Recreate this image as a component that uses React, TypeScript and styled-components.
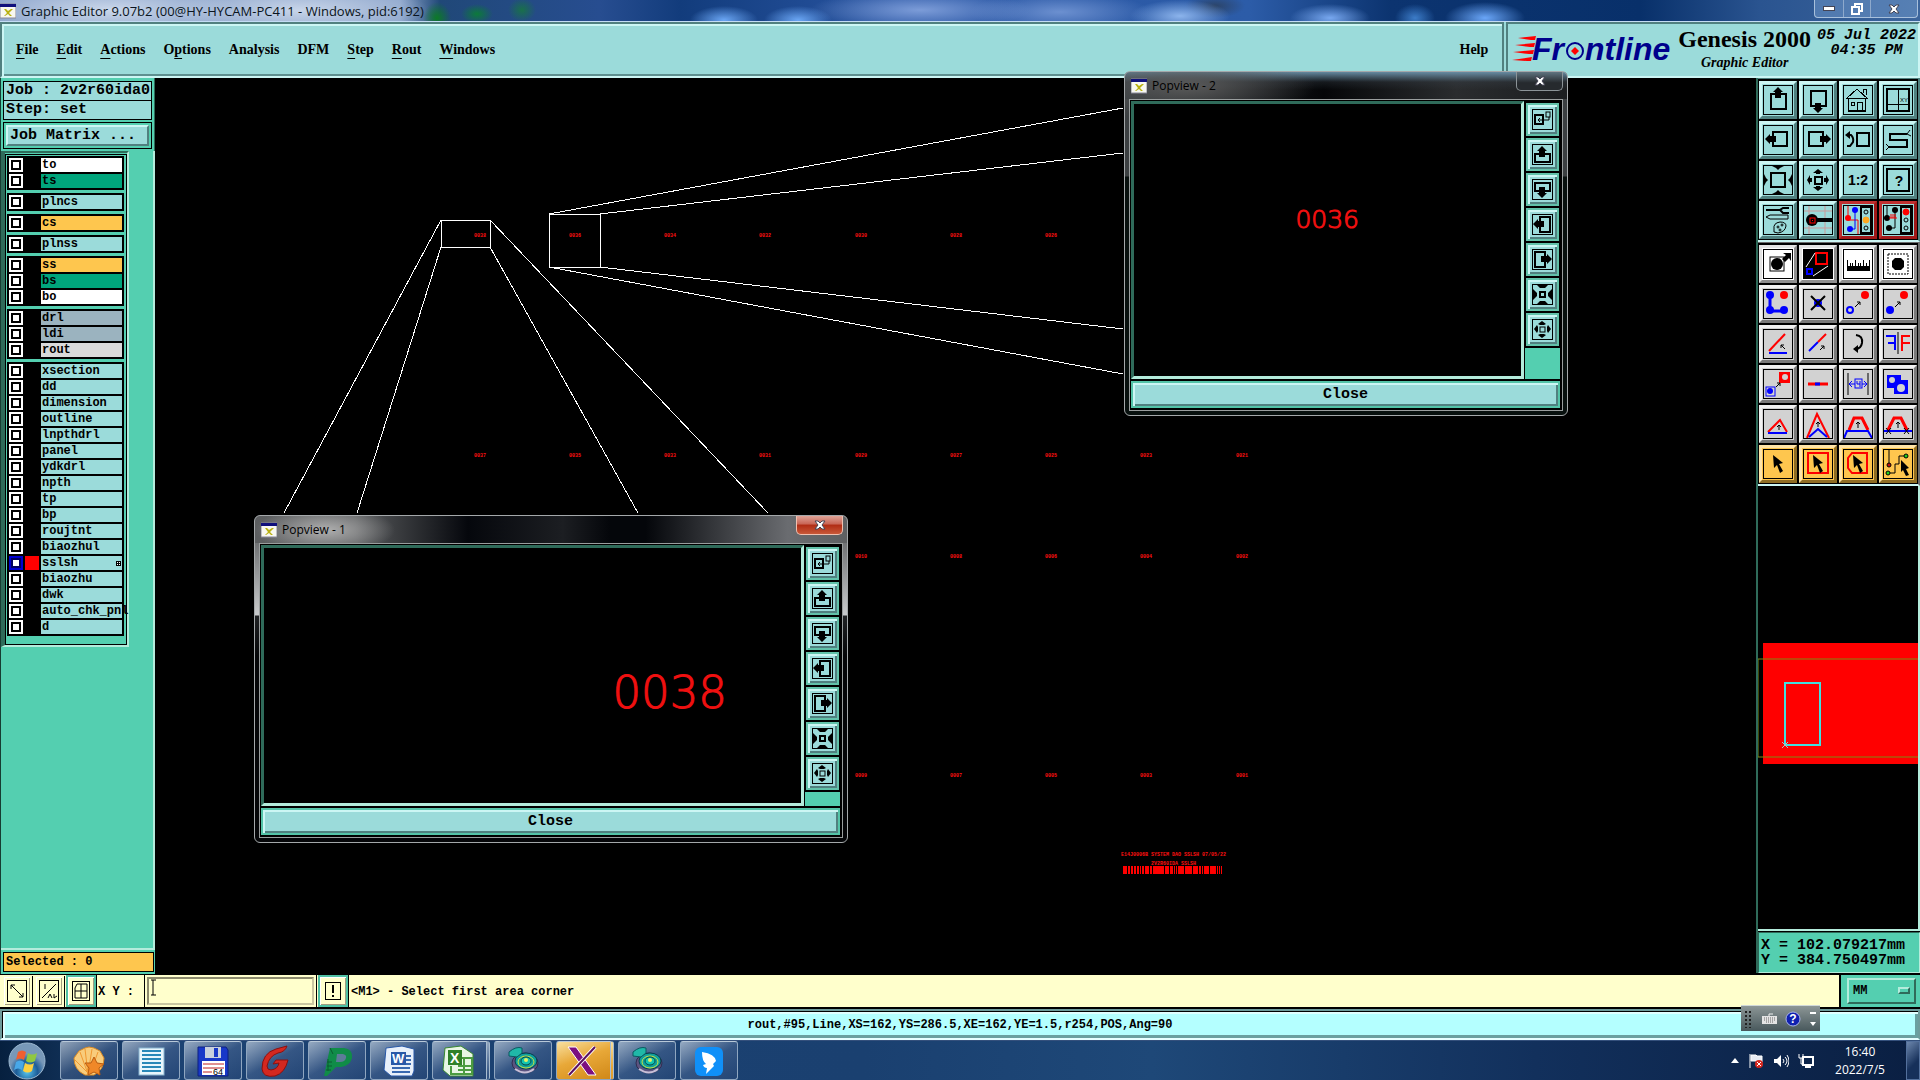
import React from 'react';
import styled, { createGlobalStyle, css } from 'styled-components';

const c = {
  aqua: '#9bdbda',
  aquaLight: '#ccf6f4',
  aquaDark: '#50807f',
  teal: '#54cfb0',
  tealLight: '#b4ecdc',
  tealDark: '#2f6b5a',
  orange: '#fec64e',
  cream: '#ffffcc',
  grey: '#d2d2d2',
  red: '#ff0000',
  blue: '#0000ff',
};
const mono = '"Liberation Mono", "Courier New", monospace';
const serif = '"Liberation Serif", "Times New Roman", serif';
const ui = '"Open Sans", "Noto Sans", sans-serif';

const Global = createGlobalStyle`
  *, *::before, *::after { box-sizing: border-box; }
  body { margin: 0; background: #000; color: #000; font-family: ${mono}; }
  button, input, select { font: inherit; color: inherit; margin: 0; padding: 0; border-radius: 0; }
  svg { display: block; flex: none; }
`;

const raised = (light: string, dark: string, w: number) => css`
  border: ${w}px solid;
  border-color: ${light} ${dark} ${dark} ${light};
`;

const Screen = styled.div`
  position: relative;
  display: flex;
  flex-direction: column;
  min-height: 100vh;
  overflow: hidden;
`;

/* ---------- title bar ---------- */
const TitleBar = styled.div`
  display: flex;
  justify-content: space-between;
  height: 22px;
  border-bottom: 1px solid #c4dcf4;
  overflow: hidden;
  background:
    radial-gradient(ellipse 130px 24px at 110px 10px, rgba(206, 218, 236, 0.95), transparent),
    radial-gradient(ellipse 130px 24px at 300px 10px, rgba(206, 218, 236, 0.9), transparent),
    radial-gradient(ellipse 14px 16px at 437px 18px, #0c7a26, transparent),
    radial-gradient(ellipse 16px 10px at 477px 14px, #0c7a3a, transparent),
    radial-gradient(ellipse 14px 12px at 522px 10px, #19704a, transparent),
    radial-gradient(ellipse 34px 14px at 724px 20px, #6aa6f4, transparent),
    radial-gradient(ellipse 34px 14px at 798px 20px, #6aa6f4, transparent),
    radial-gradient(ellipse 110px 20px at 920px 10px, #7c9cd8, transparent),
    radial-gradient(ellipse 90px 20px at 1060px 12px, #6c90d0, transparent),
    radial-gradient(ellipse 50px 16px at 1180px 16px, #8cb4ec, transparent),
    radial-gradient(ellipse 30px 12px at 1215px 6px, #2c4468, transparent),
    radial-gradient(ellipse 40px 14px at 1330px 18px, #78a8f0, transparent),
    radial-gradient(ellipse 20px 14px at 1415px 18px, #3c7cc8, transparent),
    radial-gradient(ellipse 40px 16px at 1485px 18px, #6aa6f8, transparent),
    linear-gradient(90deg, #8ea6cc 0, #8ea6cc 400px, #204878 440px, #274d90 600px, #123c7c 680px, #2a56a4 900px, #2c5ca8 1250px, #0c3470 1390px, #08306a 1640px, #2a5490 1760px, #3c659c 100%);
`;
const TitleText = styled.div`
  display: flex;
  align-items: center;
  gap: 5px;
  font: 13px/20px ${ui};
  color: #0a1420;
  white-space: nowrap;
`;
const WinControls = styled.div`
  display: flex;
  height: 18px;
  margin-right: 2px;
  border: 1px solid #a8c0dc;
  border-top: 0;
  border-radius: 0 0 4px 4px;
  background: rgba(120, 160, 208, 0.45);
`;
const WinControl = styled.button<{ $w: number }>`
  display: grid;
  place-items: center;
  width: ${p => p.$w}px;
  border: 0;
  border-left: 1px solid #8ea9cc;
  background: none;
  &:first-child { border-left: 0; }
`;

/* ---------- header ---------- */
const Header = styled.header`
  display: flex;
  height: 56px;
  background: ${c.aqua};
`;
const MenuBar = styled.nav`
  flex: 1;
  display: flex;
  align-items: center;
  gap: 18px;
  padding: 0 14px;
  border: 2px solid;
  border-color: ${c.aquaDark} ${c.aquaDark} ${c.aquaLight} ${c.aquaDark};
  box-shadow: inset 2px 2px ${c.aquaLight}, inset 0 -2px #5e9090;
`;
const MenuItem = styled.button<{ $end?: boolean }>`
  border: 0;
  background: none;
  font: bold 14px/18px ${serif};
  margin-left: ${p => (p.$end ? 'auto' : '0')};
  u { text-underline-offset: 4px; text-decoration-thickness: 1px; }
`;
const Brand = styled.div`
  display: flex;
  align-items: flex-start;
  gap: 2px;
  padding: 2px 2px 0 4px;
  margin-left: 2px;
  border: 2px solid;
  border-color: ${c.aquaDark} ${c.aquaLight} ${c.aquaLight} ${c.aquaDark};
`;
const Product = styled.div`
  font: bold 24px/26px ${serif};
  text-align: center;
  white-space: nowrap;
  margin-right: 4px;
`;
const SubProduct = styled.div`
  font: italic bold 14px/22px ${serif};
`;
const Clock = styled.div`
  font: italic bold 15px/15px ${mono};
  text-align: center;
  white-space: nowrap;
  padding-top: 2px;
`;

/* ---------- left column ---------- */
const Body = styled.div`
  flex: 1;
  display: flex;
  background: #000;
`;
const Left = styled.aside`
  display: flex;
  flex-direction: column;
  flex: none;
  width: 155px;
  margin-bottom: 1px;
  background: ${c.teal};
  border-left: 1px solid #163c32;
  font-weight: bold;
`;
const JobBox = styled.div`
  display: flex;
  flex-direction: column;
  padding: 3px 2px 2px;
  border-right: 1px solid ${c.tealDark};
  font-size: 15px;
`;
const Field = styled.div`
  height: 20px;
  margin-bottom: -1px;
  padding-left: 2px;
  border: 1px solid #000;
  background: ${c.aqua};
  line-height: 18px;
  white-space: nowrap;
`;
const MatrixWrap = styled.div`
  display: flex;
  margin-top: 3px;
  padding: 2px;
  height: 27px;
  border: 1px solid #000;
`;
const MatrixButton = styled.button`
  flex: 1;
  ${raised(c.aquaLight, c.aquaDark, 2)}
  background: ${c.aqua};
  padding-left: 2px;
  text-align: left;
  line-height: 17px;
  font-weight: bold;
`;
const LayerArea = styled.div`
  flex: 1;
  border-right: 2px solid ${c.tealLight};
  border-bottom: 2px solid ${c.tealLight};
`;
const LayerPanel = styled.div`
  width: 128px;
  padding: 1px 0 0 0;
  border: solid;
  border-width: 2px 2px 2px 4px;
  border-color: ${c.tealDark} ${c.tealLight} ${c.tealLight} ${c.tealDark};
`;
const LayerList = styled.div`
  display: flex;
  flex-direction: column;
  gap: 3px;
  padding: 1px 2px 8px 1px;
  border: 1px solid #000;
`;
const Group = styled.div`
  display: flex;
  flex-direction: column;
  gap: 2px;
  padding: 2px;
  background: #000;
`;
const LayerRow = styled.label`
  display: grid;
  grid-template-columns: 14px 14px 1fr;
  gap: 2px;
  height: 14px;
`;
const Tick = styled.input`
  appearance: none;
  width: 14px;
  height: 14px;
  border: 2px solid #fff;
  background: #fff;
  box-shadow: inset 0 0 0 2px #000;
  &:checked { border-color: #0000d0; box-shadow: inset 0 0 0 2px #000060; }
`;
const Swatch = styled.span<{ $on?: boolean }>`
  background: ${p => (p.$on ? c.red : '#000')};
`;
const LayerName = styled.span<{ $bg: string }>`
  display: flex;
  align-items: center;
  justify-content: space-between;
  min-width: 0;
  padding: 0 1px;
  background: ${p => p.$bg};
  font-size: 12px;
  line-height: 14px;
`;
const Selected = styled.div`
  margin: 2px 1px 2px 2px;
  height: 20px;
  padding-left: 2px;
  border: 1px solid #000;
  background: ${c.orange};
  font-size: 12px;
  line-height: 18px;
`;

/* ---------- canvas ---------- */
const Canvas = styled.main`
  flex: 1;
  min-width: 0;
  background: #000;
`;
const Tiny = styled.text`
  font: bold 5px ${mono};
  fill: #ff1010;
`;

/* ---------- right column ---------- */
const Right = styled.aside`
  display: flex;
  flex-direction: column;
  flex: none;
  width: 164px;
  margin-bottom: 2px;
  border-left: 2px solid ${c.tealDark};
`;
const ToolGrid = styled.div<{ $edge: string }>`
  display: grid;
  grid-template-columns: repeat(4, 38px);
  gap: 2px;
  padding: 2px 2px 1px 1px;
  border-top: 1px solid ${p => p.$edge};
  border-bottom: 2px solid ${c.aquaLight};
  border-right: 2px solid ${p => p.$edge};
`;
const tones = {
  aqua: [c.aqua, c.aquaLight, c.aquaDark],
  alert: [c.aqua, '#c03030', '#a01818'],
  white: ['#ffffff', '#e4e4e4', '#8e8e8e'],
  grey: [c.grey, '#f2f2f2', '#7a7a7a'],
  orange: [c.orange, '#ffe4a8', '#8f6d24'],
};
type Tone = keyof typeof tones;
const ToolButton = styled.button<{ $tone: Tone }>`
  display: grid;
  place-items: center;
  width: 38px;
  height: 38px;
  background: ${p => tones[p.$tone][0]};
  ${p => raised(tones[p.$tone][1], tones[p.$tone][2], 3)}
`;
const Preview = styled.div`
  flex: 1;
  background: #000;
  border-right: 2px solid ${c.tealLight};
  border-bottom: 2px solid ${c.tealLight};
`;
const Coords = styled.div`
  margin-top: 1px;
  padding: 5px 2px 4px;
  background: ${c.teal};
  ${raised(c.tealDark, c.tealLight, 1)}
  font: bold 15px/15px ${mono};
  white-space: pre;
`;

/* ---------- command line ---------- */
const Command = styled.div`
  display: flex;
  height: 34px;
  padding-left: 2px;
  background: ${c.cream};
  border-bottom: 2px solid #000;
  font: bold 12px/16px ${mono};
`;
const CmdButton = styled.button<{ $on?: boolean }>`
  display: grid;
  place-items: center;
  width: 30px;
  margin-right: 2px;
  border: 2px solid ${p => (p.$on ? '#4fc0a4' : c.cream)};
  background: ${c.cream};
  box-shadow: inset 1px 1px #fff, inset -1px -1px #a09c80, ${p => (p.$on ? '1px 0 #000' : '1px 1px #000')};
`;
const CmdLabel = styled.label`
  width: 46px;
  line-height: 34px;
  white-space: pre;
`;
const EntryWrap = styled.div`
  position: relative;
  display: flex;
  width: 173px;
  margin-right: 1px;
  padding: 2px;
  border-left: 1px solid #000;
  border-right: 1px solid #000;
`;
const Entry = styled.input`
  flex: 1;
  min-width: 0;
  background: ${c.cream};
  ${raised('#8c8a6c', '#c9c7a2', 2)}
  outline: 0;
  padding-left: 4px;
`;
const Caret = styled.svg`
  position: absolute;
  left: 5px;
  top: 4px;
`;
const Prompt = styled.div`
  flex: 1;
  padding-left: 1px;
  line-height: 34px;
`;
const UnitBox = styled.div`
  position: relative;
  display: flex;
  width: 81px;
  padding: 3px 4px 3px 6px;
  border-left: 2px solid #000;
  background: ${c.teal};
`;
const Unit = styled.select`
  flex: 1;
  appearance: none;
  background: ${c.teal};
  ${raised(c.tealLight, c.tealDark, 2)}
  padding-left: 4px;
  outline: 0;
`;
const UnitMark = styled.span`
  position: absolute;
  right: 10px;
  top: 12px;
  width: 12px;
  height: 7px;
  ${raised(c.tealLight, c.tealDark, 2)}
`;
const Status = styled.div`
  height: 31px;
  border: 2px solid #6e9c9c;
  border-bottom-color: #e6ffff;
  background: #b4ffff;
  box-shadow: inset 1px 1px #000, inset 3px 3px #e0ffff, inset -3px -3px #6aa0a0;
  font: bold 12px/28px ${mono};
  text-align: center;
`;

/* ---------- task bar ---------- */
const TaskBar = styled.footer`
  display: flex;
  align-items: stretch;
  height: 40px;
  padding-left: 6px;
  border-top: 1px solid #34507c;
  background: linear-gradient(90deg, #06203f, #1c4272 8%, #1a4070 45%, #1e4878 60%, #12305c 80%, #0a1f42);
`;
const Start = styled.button`
  width: 44px;
  margin-right: 10px;
  border: 0;
  background: none;
`;
const Tasks = styled.div`
  flex: 1;
  display: flex;
  gap: 4px;
`;
const Task = styled.button<{ $active?: boolean; $stacked?: boolean }>`
  display: grid;
  place-items: center;
  width: 58px;
  border: 1px solid #8fa6c0;
  border-top-color: #b8c8d8;
  border-radius: 3px;
  ${p => p.$stacked && css`
    padding-right: 4px;
    border-right: 4px double #a8bcd0;
  `}
  background: ${p =>
    p.$active
      ? 'linear-gradient(160deg, #f8e0a0, #e8a838 45%, #d08818)'
      : 'linear-gradient(150deg, rgba(190,204,220,0.75), rgba(70,100,145,0.6) 50%, rgba(40,72,120,0.6))'};
`;
const Tray = styled.div`
  display: flex;
  align-items: center;
  gap: 9px;
  color: #fff;
  font: 12px/18px ${ui};
  text-align: center;
`;
const TrayTime = styled.div`
  width: 74px;
`;
const ShowDesktop = styled.button`
  align-self: stretch;
  width: 14px;
  border: 1px solid #53709c;
  background: linear-gradient(135deg, #6c86ac, #16305a 60%);
`;
const LangBar = styled.div`
  position: absolute;
  right: 100px;
  bottom: 49px;
  display: flex;
  align-items: center;
  justify-content: space-around;
  width: 79px;
  height: 26px;
  border-top: 1px solid #d0d8d8;
  background: linear-gradient(#8c9696, #48585c);
`;

/* ---------- popview windows ---------- */
const Window = styled.section<{ $x: number; $y: number; $w: number; $h: number; $dim?: boolean }>`
  position: absolute;
  left: ${p => p.$x}px;
  top: ${p => p.$y}px;
  width: ${p => p.$w}px;
  height: ${p => p.$h}px;
  display: flex;
  flex-direction: column;
  padding: 0 4px 4px;
  border: 1px solid #a4a8aa;
  border-radius: 6px;
  background: ${p =>
    p.$dim
      ? `radial-gradient(ellipse 130px 34px at 60px 14px, #5a5a5a, transparent),
         linear-gradient(rgba(110,150,175,0.9), rgba(60,70,80,0.3) 10px, transparent 18px),
         linear-gradient(90deg, #30363a, #050608 45%, #2a2c2e 75%, #1c1e20) 0 0 / 100% 27px no-repeat,
         linear-gradient(#3c4042 104px, #08100e 105px)`
      : `radial-gradient(ellipse 70px 24px at 70px 14px, #b0b0b0, transparent),
         linear-gradient(90deg, #5c5e60, #5a5c5e 17%, #05070c 36%, #1c1e22 52%, #04060a 60%, #04060a 66%, #6a6c70 90%, #5e6062) 0 0 / 100% 27px no-repeat,
         linear-gradient(#707274 27px, #c8cacc 99px, #202224 100px, #050608 140px)`};
`;
const WindowTitle = styled.div`
  display: flex;
  justify-content: space-between;
  height: 27px;
  padding-left: 2px;
  font: 12px/26px ${ui};
  color: #000;
`;
const WindowName = styled.div`
  display: flex;
  align-items: center;
  gap: 5px;
`;
const WindowClose = styled.button<{ $dim?: boolean }>`
  display: grid;
  place-items: center;
  width: 47px;
  height: 19px;
  border: 1px solid ${p => (p.$dim ? '#8c9498' : '#f0c0b0')};
  border-top: 0;
  border-radius: 0 0 5px 5px;
  background: ${p => (p.$dim ? 'linear-gradient(#607480, #262a2e 60%)' : 'linear-gradient(#e0a498, #c86454 45%, #b02c14 50%, #c85838)')};
`;
const WindowBody = styled.div`
  flex: 1;
  display: grid;
  grid-template-columns: 1fr 35px;
  grid-template-rows: 1fr 28px;
  gap: 1px;
  padding: 1px 2px 2px 1px;
  border: 1px solid #9a9e9e;
  background: #000;
`;
const View = styled.div<{ $pad: string }>`
  ${raised(c.tealDark, c.tealLight, 3)}
  background: #000;
  padding: ${p => p.$pad};
  text-align: right;
`;
const Reading = styled.span<{ $size: number }>`
  font: 200 ${p => p.$size}px/${p => p.$size}px "DejaVu Sans Light", "DejaVu Sans", sans-serif;
  color: #f01010;
  -webkit-text-stroke: 1px #f01010;
`;
const PopTools = styled.div`
  display: flex;
  flex-direction: column;
  gap: 2px;
  padding: 2px 1px 0;
`;
const PopFill = styled.div`
  flex: 1;
  margin: 0 -1px;
  background: ${c.teal};
`;
const PopButton = styled.button`
  display: grid;
  place-items: center;
  width: 33px;
  height: 33px;
  border: 2px solid #62c2aa;
  background: ${c.aqua};
  box-shadow: inset 2px 2px ${c.aquaLight}, inset -2px -2px ${c.aquaDark};
`;
const CloseButton = styled.button`
  grid-column: 1 / 3;
  margin-top: 1px;
  border: 2px solid #54c4a8;
  background: ${c.aqua};
  box-shadow: inset 2px 2px ${c.aquaLight}, inset -2px -2px ${c.aquaDark};
  font: bold 15px/20px ${mono};
`;

/* ---------- drawings ---------- */
const K = '#000';
const sq = (x: number, y: number, w: number, h = w, s = 2, col = K) => (
  <rect x={x} y={y} width={w} height={h} fill="none" stroke={col} strokeWidth={s} />
);
const cursor = <path d="M10 6l10 8-4 1 4 7-3 2-3-8-3 3z" fill={K} />;
const smallArrow = <path d="M12 18l5-5M14 13h3v3" fill="none" stroke={K} />;
const outArrows = <path d="M15 4l5 4h-3v1h-4V8h-3zM15 26l5-4h-3v-1h-4v1h-3zM4 15l3-5v3h2v4H7v3zM26 15l-3-5v3h-2v4h2v3z" fill={K} />;
const inArrows = <path d="M9 1h12l-4 2-2 2-2-2zM9 29h12l-4-2-2-2-2 2zM1 9v12l2-4 2-2-2-2zM29 9v12l-2-4-2-2 2-2z" fill={K} />;
const lights = (on: number, col: string) => (
  <>
    <rect x="18" y="2" width="10" height="26" fill={c.aqua} stroke={K} strokeWidth="2" />
    {[7, 15, 23].map((y, i) => (
      <circle key={y} cx="23" cy={y} r={i === on ? 3 : 2} fill={i === on ? col : 'none'} stroke={i === on ? col : K} />
    ))}
  </>
);

const icons: Record<string, React.ReactNode> = {
  'Pan up': <>{sq(8, 9, 15)}<path d="M15 2l5 5h-2v6h-6V7h-2z" fill={K} /></>,
  'Pan down': <>{sq(8, 6, 15)}<path d="M15 28l5-5h-2v-5h-6v5h-2z" fill={K} /></>,
  Home: (
    <g fill="none" stroke={K} shapeRendering="crispEdges">
      <path d="M3 14L14 4l11 10M5 13v13h17V13M14 26v-9h5v9M4 13h20M20 8V4h3v6" />
      <rect x="8" y="17" width="3" height="3" /><path d="M5 26h18" strokeWidth="2" />
    </g>
  ),
  'XY grid': <>{sq(4, 4, 22)}<path d="M15 4v22M4 19h22" stroke={K} shapeRendering="crispEdges" /><text x="17" y="17" fontSize="6" fontFamily="Liberation Sans">XY</text></>,
  'Pan left': <>{sq(10, 7, 14)}<path d="M2 14l5-5v2h6v6H7v2z" fill={K} /></>,
  'Pan right': <>{sq(6, 7, 14)}<path d="M28 14l-5-5v2h-6v6h6v2z" fill={K} /></>,
  'Previous view': <>{sq(14, 8, 12, 13)}<path d="M5 10h3q3 3 2 7l-3 4H4" fill="none" stroke={K} strokeWidth="2" /><path d="M2 10l5-4v8z" fill={K} /></>,
  Serpentine: <><path d="M24 9H7v6h17v7H6" fill="none" stroke={K} strokeWidth="2" /><path d="M24 9l3-4M28 11l-4-2M6 22l-3-3M6 22l-3 3" stroke={K} fill="none" /></>,
  'Zoom in': <>{sq(8, 8, 14)}{inArrows}</>,
  'Zoom out': <>{sq(12, 12, 7)}{outArrows}</>,
  'Zoom 1:2': <text x="15" y="20" textAnchor="middle" fontFamily="Liberation Sans" fontWeight="bold" fontSize="14">1:2</text>,
  Query: <>{sq(4, 4, 22)}<text x="16" y="21" textAnchor="middle" fontFamily="Liberation Sans" fontWeight="bold" fontSize="14">?</text></>,
  Setup: (
    <g fill="none" stroke={K}>
      <path d="M3 5h14" strokeWidth="2" /><path d="M26 3h-6l-3 2 3 3h6" strokeWidth="2" />
      <path d="M3 12l4-2h18v4H7z" /><path d="M11 24q-1-6 6-7 6 0 6 4-1 6-8 7l-4-1z" /><circle cx="15" cy="22" r="1" /><circle cx="19" cy="20" r="1" /><circle cx="17" cy="25" r="1" />
    </g>
  ),
  Magnify: (
    <>
      <path d="M6 1v28M22 1v28M1 6h28M1 23h28" stroke="#c99" /><circle cx="9" cy="15" r="6" fill={K} />
      <path d="M14 15h15" stroke={K} strokeWidth="4" />{sq(7, 13, 5, 5, 1, c.red)}<rect x="9" y="15" width="1" height="1" fill={c.red} />
    </>
  ),
  'Check nets': (
    <>
      <path d="M5 1v14h10v14" fill="none" stroke={c.red} /><circle cx="5" cy="13" r="3" fill={c.red} />
      <path d="M12 4v20H6" fill="none" stroke={c.blue} /><circle cx="12" cy="5" r="3" fill={c.blue} /><circle cx="7" cy="24" r="3" fill={c.blue} />
      {lights(1, '#fea820')}
    </>
  ),
  'Stop nets': (
    <>
      <path d="M4 1v12M12 5v18H6" fill="none" stroke={K} /><circle cx="4" cy="13" r="3" fill={K} /><circle cx="12" cy="5" r="3" fill={K} /><circle cx="6" cy="23" r="3" fill={K} />
      <path d="M6 13h8M8 9v4M10 9v4M12 9v4" stroke={c.red} />{lights(0, c.red)}
    </>
  ),
  'Move feature': <>{sq(7, 8, 14, 14, 1)}<circle cx="14" cy="15" r="6" fill={K} /><path d="M19 10l4-4-3-2h8v8l-2-3-4 4z" fill={K} /></>,
  Popview: <><rect x="1" y="1" width="28" height="28" fill={K} />{sq(13, 4, 11, 11, 2, c.red)}{sq(4, 20, 5, 5, 2, c.blue)}<path d="M3 18L12 4M10 27l15-10" stroke="#fff" /></>,
  Ruler: <g shapeRendering="crispEdges"><rect x="4" y="17" width="23" height="5" fill={K} /><path d="M4 11v7M7 14v4M9 14v4M12 11v7M15 14v4M17 14v4M20 11v7M23 14v4M26 11v7" stroke={K} /></g>,
  'Select pad': <><rect x="5" y="5" width="20" height="20" fill="none" stroke={K} strokeDasharray="2 1" /><path d="M12 9h6l3 3v6l-3 3h-6l-3-3v-6z" fill={K} /></>,
  Chain: <><path d="M7 6v16h14" fill="none" stroke={c.blue} strokeWidth="3" /><circle cx="7" cy="6" r="4" fill={c.blue} /><circle cx="7" cy="21" r="4" fill={c.blue} /><circle cx="21" cy="21" r="4" fill={c.blue} /><circle cx="21" cy="6" r="4" fill={c.red} /></>,
  Delete: <><circle cx="15" cy="14" r="4" fill={c.blue} /><path d="M8 7l14 14M22 7L8 21" stroke={K} strokeWidth="2" /></>,
  'Copy feature': <><circle cx="7" cy="21" r="3" fill="none" stroke={c.blue} strokeWidth="2" /><circle cx="22" cy="6" r="4" fill={c.red} />{smallArrow}</>,
  'Move point': <><circle cx="7" cy="21" r="4" fill={c.blue} /><circle cx="21" cy="6" r="4" fill={c.red} />{smallArrow}</>,
  Rotate: <><path d="M6 22L22 5" stroke={c.red} strokeWidth="2" /><path d="M6 24h18" stroke={c.blue} strokeWidth="2" /><path d="M22 20l-4-4M18 19v-3h3" stroke={K} fill="none" /></>,
  Extend: <><path d="M6 22l9-9" stroke={c.blue} strokeWidth="2" /><path d="M15 13l8-8" stroke={c.red} strokeWidth="2" /><path d="M17 21l4-4M18 17h3v3" stroke={K} fill="none" /></>,
  Arc: <><path d="M13 6q7 1 6 8-1 6-7 6" fill="none" stroke={K} strokeWidth="2" /><path d="M10 20l5-4v8z" fill={K} /></>,
  Mirror: <><path d="M3 7h9v14M5 14h7" fill="none" stroke={c.blue} strokeWidth="2" /><path d="M15 3v22" stroke={K} /><path d="M27 7h-8v15M27 14h-8" fill="none" stroke={c.red} strokeWidth="2" /></>,
  Transform: <>{sq(3, 18, 9, 9, 1, c.blue)}<circle cx="7" cy="22" r="3" fill={c.blue} /><rect x="16" y="3" width="11" height="11" fill={c.red} /><circle cx="22" cy="8" r="3" fill={c.grey} /><path d="M13 18l4-4M14 14h3v3" stroke={K} fill="none" /></>,
  Merge: <><path d="M5 15h20" stroke={c.red} strokeWidth="3" /><path d="M12 15h5" stroke={c.blue} strokeWidth="3" /></>,
  Spacing: <><path d="M5 4v22M25 4v22" stroke={K} /><path d="M6 15h18M9 12l-3 3 3 3M21 12l3 3-3 3" fill="none" stroke={c.blue} /><rect x="12" y="10" width="7" height="9" fill={c.grey} stroke={c.blue} /><path d="M14 12v3h3M17 12v6" fill="none" stroke={c.blue} /></>,
  Contour: <><path d="M4 6h14v5h7v14H11v-6H4z" fill={c.blue} /><circle cx="9" cy="11" r="3" fill={c.grey} /><circle cx="18" cy="19" r="4" fill={c.grey} /></>,
  'Corner low': <><path d="M5 23l12-12 7 12" fill="none" stroke={c.red} strokeWidth="2" /><path d="M5 24h19" stroke={c.blue} strokeWidth="2" /><path d="M16 21v-5M14 18l2-2 2 2" stroke={K} fill="none" /></>,
  'Corner high': <><path d="M4 29L14 5l12 24" fill="none" stroke={c.red} strokeWidth="2" /><path d="M6 28l9-8 9 8" fill="none" stroke={c.blue} strokeWidth="2" /><path d="M15 18v-5M13 15l2-2 2 2" stroke={K} fill="none" /></>,
  'Trapezoid fill': <><path d="M6 21l5-12h8l6 12" fill="none" stroke={c.red} strokeWidth="3" /><path d="M1 29l3-7h21l4 7" fill="none" stroke={c.blue} strokeWidth="2" /><path d="M15 19v-6M13 15l2-2 2 2" stroke={K} fill="none" /></>,
  'Trapezoid cut': <><path d="M5 21l6-12h7l6 12" fill="none" stroke={c.red} strokeWidth="3" /><path d="M1 22h28" stroke={c.blue} strokeWidth="2" /><path d="M3 19l5 6M8 19l-5 6M21 19l5 6M26 19l-5 6M15 19v-6M13 15l2-2 2 2" stroke={K} fill="none" /></>,
  Pointer: cursor,
  'Pointer in box': <>{sq(5, 4, 20, 20, 2, c.red)}{cursor}</>,
  'Pointer in polygon': <><path d="M9 4h15v20H9l-4-5V9z" fill="none" stroke={c.red} strokeWidth="2" />{cursor}</>,
  'Pointer on net': (
    <>
      <path d="M6 1v14M6 24h6v-9h4V7h7" fill="none" stroke={K} /><circle cx="6" cy="16" r="2" fill="#c01010" stroke={K} />
      <circle cx="5" cy="24" r="2" fill="#20d020" stroke={K} /><circle cx="23" cy="7" r="2" fill="#20d020" stroke={K} />
      <path d="M18 11l8 8-3 1 3 6-3 1-3-6-2 2z" fill={K} />
    </>
  ),
};

const ToolIcon = ({ name }: { name: string }) => (
  <svg width="30" height="30" viewBox="0 0 30 30" aria-hidden="true">
    {icons[name]}
    <rect x="0.5" y="0.5" width="29" height="29" fill="none" stroke={K} />
  </svg>
);

const topTools: [string, Tone][] = [
  ['Pan up', 'aqua'], ['Pan down', 'aqua'], ['Home', 'aqua'], ['XY grid', 'aqua'],
  ['Pan left', 'aqua'], ['Pan right', 'aqua'], ['Previous view', 'aqua'], ['Serpentine', 'aqua'],
  ['Zoom in', 'aqua'], ['Zoom out', 'aqua'], ['Zoom 1:2', 'aqua'], ['Query', 'aqua'],
  ['Setup', 'aqua'], ['Magnify', 'aqua'], ['Check nets', 'alert'], ['Stop nets', 'alert'],
];
const editTools: [string, Tone][] = [
  ['Move feature', 'white'], ['Popview', 'white'], ['Ruler', 'white'], ['Select pad', 'white'],
  ['Chain', 'grey'], ['Delete', 'grey'], ['Copy feature', 'grey'], ['Move point', 'grey'],
  ['Rotate', 'grey'], ['Extend', 'grey'], ['Arc', 'grey'], ['Mirror', 'grey'],
  ['Transform', 'grey'], ['Merge', 'grey'], ['Spacing', 'grey'], ['Contour', 'grey'],
  ['Corner low', 'grey'], ['Corner high', 'grey'], ['Trapezoid fill', 'grey'], ['Trapezoid cut', 'grey'],
  ['Pointer', 'orange'], ['Pointer in box', 'orange'], ['Pointer in polygon', 'orange'], ['Pointer on net', 'orange'],
];

const popIcons: [string, React.ReactNode][] = [
  ['Select area', <>{sq(3, 6, 8, 9)}{sq(14, 3, 4, 5, 1)}<path d="M17 8v3H6M8 9l-2 2 2 2" fill="none" stroke={K} /></>],
  ['Up', <>{sq(3, 10, 15, 8)}<path d="M10 2l5 5h-2v6H7V7H5z" fill={K} /></>],
  ['Down', <>{sq(3, 4, 15, 8)}<path d="M10 19l5-5h-2V8H7v6H5z" fill={K} /></>],
  ['Left', <>{sq(8, 3, 10, 15)}<path d="M1 10l5-5v2h6v6H6v2z" fill={K} /></>],
  ['Right', <>{sq(3, 3, 10, 15)}<path d="M20 10l-5-5v2H9v6h6v2z" fill={K} /></>],
  ['Shrink', <>{sq(8, 8, 5)}<path d="M5 1h11l-3 3h-5zM5 20h11l-3-3h-5zM1 5v11l4-4V9zM20 5v11l-4-4V9z" fill={K} /></>],
  ['Grow', <>{sq(8, 8, 5, 5, 1)}<path d="M10 2l4 3-2 1H8L6 5zM10 19l4-3-2-1H8l-2 1zM2 10l3-4 1 2v4l-1 2zM19 10l-3-4-1 2v4l1 2z" fill={K} /></>],
];

const AppIcon = () => (
  <svg width="16" height="16" viewBox="0 0 16 16" aria-hidden="true">
    <rect x="0" y="1" width="16" height="14" fill="#f8f8f0" stroke="#889" />
    <rect x="0" y="1" width="16" height="3" fill="#10107c" />
    <path d="M4 6h2l2 2 3-2h2L9 10l3 3h-2l-2-2-3 2H4l3-3z" fill="#b8b010" />
  </svg>
);
const CrossIcon = () => (
  <svg width="12" height="10" viewBox="0 0 12 10" aria-hidden="true">
    <path d="M1 1h3l2 2 2-2h3L8 5l3 4H8L6 7 4 9H1l3-4z" fill="#fff" stroke="#445" />
  </svg>
);
const Logo = () => (
  <svg width="164" height="44" viewBox="0 0 164 44" role="img" aria-label="Frontline">
    <path d="M6 12l18-2-1 4h-4zM3 19l20-2-1 4h-4zM1 26l21-2-1 4h-4zM0 34l20-3-1 4h-4z" fill={c.red} />
    <g fontFamily="Liberation Sans" fontStyle="italic" fontWeight="bold" fontSize="32" fill="#00008c">
      <text x="20" y="34">Fr</text>
      <text x="73" y="34">ntline</text>
    </g>
    <circle cx="63" cy="25" r="8" fill={c.aqua} stroke="#00008c" strokeWidth="2" />
    <path d="M63 21l4 4-4 4-4-4z" fill={c.red} />
  </svg>
);

const groups: [string, string][][] = [
  [['to', '#ffffff'], ['ts', '#00a57c']],
  [['plncs', c.aqua]],
  [['cs', c.orange]],
  [['plnss', c.aqua]],
  [['ss', c.orange], ['bs', '#00a57c'], ['bo', '#ffffff']],
  [['drl', '#9bb3bf'], ['ldi', '#9bb3bf'], ['rout', '#dadada']],
  ['xsection', 'dd', 'dimension', 'outline', 'lnpthdrl', 'panel', 'ydkdrl', 'npth', 'tp', 'bp', 'roujtnt',
    'biaozhul', 'sslsh', 'biaozhu', 'dwk', 'auto_chk_pnl', 'd'].map(n => [n, c.aqua] as [string, string]),
];

const columns = [319, 414, 509, 604, 700, 795, 890, 985, 1081];
const serials: [number, number, string[]][] = [
  [159, 0, ['0038', '0036', '0034', '0032', '0030', '0028', '0026']],
  [379, 0, ['0037', '0035', '0033', '0031', '0029', '0027', '0025', '0023', '0021']],
  [480, 4, ['0010', '0008', '0006', '0004', '0002']],
  [699, 4, ['0009', '0007', '0005', '0003', '0001']],
];
const bars: [number, number][] = [
  [0, 4], [5, 2], [8, 2], [11, 2], [14, 2], [17, 1], [19, 2], [22, 4], [27, 2], [30, 11], [42, 4], [47, 3], [51, 1], [53, 1],
  [55, 6], [62, 7], [70, 5], [76, 2], [79, 1], [81, 5], [87, 6], [94, 1], [96, 1], [98, 1],
];

const Board = () => (
  <svg width="100%" height="100%" shapeRendering="crispEdges" aria-label="Board view">
    <g fill="none" stroke="#fff">
      <rect x="286" y="142" width="49" height="27" />
      <rect x="394" y="136" width="51" height="53" />
      <path d="M286 142L129 435M286 169L202 435M335 169L483 435M335 142L613 435" />
      <path d="M394 136L968 30M445 136L968 75M445 189L968 251M394 189L968 296" />
    </g>
    {serials.map(([y, start, list]) =>
      list.map((s, i) => <Tiny key={s} x={columns[start + i]} y={y}>{s}</Tiny>),
    )}
    <Tiny x="966" y="778">E14J0006B SYSTEM DAO SSLSH 07/05/22</Tiny>
    <Tiny x="996" y="787">2V2R60IDA SSLSH</Tiny>
    {bars.map(([b, w]) => <rect key={b} x={968 + b} y="788" width={w} height="8" fill={c.red} />)}
  </svg>
);

type PopProps = { n: number; x: number; y: number; w: number; h: number; dim?: boolean; size: number; pad: string; value: string };
const PopWindow = ({ n, x, y, w, h, dim, size, pad, value }: PopProps) => (
  <Window $x={x} $y={y} $w={w} $h={h} $dim={dim}>
    <WindowTitle>
      <WindowName><AppIcon /><span>Popview - {n}</span></WindowName>
      <WindowClose $dim={dim} aria-label={`Close popview ${n}`}><CrossIcon /></WindowClose>
    </WindowTitle>
    <WindowBody>
      <View $pad={pad}><Reading $size={size}>{value}</Reading></View>
      <PopTools>
        {popIcons.map(([label, art]) => (
          <PopButton key={label} aria-label={label}>
            <svg width="21" height="21" viewBox="0 0 21 21" aria-hidden="true">
              {art}
              <rect x="0.5" y="0.5" width="20" height="20" fill="none" stroke={K} />
            </svg>
          </PopButton>
        ))}
        <PopFill />
      </PopTools>
      <CloseButton>Close</CloseButton>
    </WindowBody>
  </Window>
);

const svg32 = (children: React.ReactNode) => <svg width="34" height="34" viewBox="0 0 34 34" aria-hidden="true">{children}</svg>;
const swirl = svg32(
  <>
    <ellipse cx="19" cy="19" rx="13" ry="10" fill="#5c5480" stroke="#302c50" />
    <ellipse cx="20" cy="17" rx="11" ry="8" fill="#10a09c" stroke="#083c50" />
    <ellipse cx="20" cy="18" rx="8" ry="6" fill="none" stroke="#c8e040" />
    <ellipse cx="20" cy="17" rx="5" ry="4" fill="#12c4b0" stroke="#064848" />
    <circle cx="20" cy="16" r="2" fill="#e8f060" />
    <path d="M3 8q7-6 13-4v5l-5 4-8-1z" fill="#20b8a8" stroke="#0a5860" />
    <path d="M9 25q10 7 19 0" fill="none" stroke="#c8c0d8" strokeWidth="2" />
  </>,
);
const tasks: [string, React.ReactNode][] = [
  ['Shell', svg32(<><path d="M13 31Q2 26 2 14l5-7 6-3 4-1 5 1 6 3 4 7q0 12-10 17z" fill="#f8cc7c" stroke="#dc8c24" /><path d="M16 30L8 8M16 30L13 5M16 30l4-25M18 30l8-22M17 30L3 16" stroke="#f09830" fill="none" /><path d="M22 13l3 6 7 1-5 4 1 7-6-3-6 3 1-7-4-5 6 0z" fill="#f08828" stroke="#b85c10" /></>)],
  ['Notes', svg32(<><rect x="5" y="4" width="25" height="27" fill="#e8f6fc" stroke="#88b4d0" /><path d="M8 7h19M8 11h19M8 15h19M8 19h19M8 23h19M8 27h19" stroke="#2888b8" strokeWidth="2" /></>)],
  ['Floppy', svg32(<><path d="M2 3h28l2 3v26H2z" fill="#1838c8" stroke="#0c2080" /><rect x="9" y="3" width="16" height="11" fill="#c8d0dc" /><rect x="18" y="4" width="4" height="9" fill="#1838c8" /><rect x="6" y="17" width="23" height="14" fill="#fff" /><path d="M7 20h21M7 24h21M7 28h9" stroke="#c02020" /><text x="17" y="31" fontFamily="Liberation Sans" fontSize="9">64</text></>)],
  ['G editor', svg32(<path d="M29 2q-2 6-9 7-9 3-11 13 0 4 4 4 7-1 8-7l-6 1 3-4h12q-3 13-13 16-12 2-13-7Q4 9 18 5z" fill="#d42820" stroke="#8c1010" />)],
  ['P tool', svg32(<><path d="M10 4h14q9 1 8 10-2 8-11 9h-5l-9 9H4l4-19z" fill="#108c48" /><path d="M17 10h6q4 1 3 4-1 4-6 4h-4z" fill="#5c7c98" /><path d="M8 15v12M7 18h5M7 22h5M6 26h5M10 4l3 6" stroke="#0b5c30" fill="none" /></>)],
  ['Word', svg32(<><path d="M4 4l16-2 12 3v22l-2 5H9L2 26z" fill="#e8f0fa" stroke="#2858a8" /><path d="M17 12h12M17 16h12M17 20h12M10 24h18M10 28h18" stroke="#3868b0" strokeWidth="2" /><rect x="9" y="8" width="15" height="13" fill="#2858a8" /><text x="10" y="19" fontFamily="Liberation Sans" fontWeight="bold" fontSize="13" fill="#fff">W</text></>)],
  ['Excel', svg32(<><path d="M4 4l16-2 12 8v22H9L2 26z" fill="#e8f6e4" stroke="#388830" /><path d="M16 14h15v16H10V22M17 22h14M23 14v16M17 26h14" stroke="#4c9c40" strokeWidth="2" fill="none" /><rect x="7" y="6" width="14" height="15" fill="#308028" /><text x="9" y="19" fontFamily="Liberation Sans" fontWeight="bold" fontSize="14" fill="#fff">X</text></>)],
  ['Genesis', swirl],
  ['X server', svg32(<><path d="M3 3h8l20 28h-8z" fill="#7c1080" stroke="#fff" /><path d="M30 3L4 31" stroke="#fff" strokeWidth="4" /><path d="M30 3L4 31" stroke="#5c1060" strokeWidth="2" /></>)],
  ['Genesis 2', swirl],
  ['Bird', svg32(<><rect x="3" y="3" width="28" height="29" rx="6" fill="#1090f8" /><path d="M10 8q13 2 14 9l-3 3 1 2-8 8 1-6q-3 0-4-3l3-1q-4-3-4-12z" fill="#fff" /></>)],
];

const menus: [string, string, string][] = [
  ['', 'F', 'ile'], ['', 'E', 'dit'], ['', 'A', 'ctions'], ['O', 'p', 'tions'], ['Analysis', '', ''],
  ['DFM', '', ''], ['', 'S', 'tep'], ['', 'R', 'out'], ['', 'W', 'indows'],
];

export default function App() {
  return (
    <Screen>
      <Global />
      <TitleBar>
        <TitleText><AppIcon />Graphic Editor 9.07b2 (00@HY-HYCAM-PC411 - Windows, pid:6192)</TitleText>
        <WinControls>
          <WinControl $w={28} aria-label="Minimize"><svg width="12" height="5"><rect x="0.5" y="0.5" width="11" height="4" fill="#fff" stroke="#445" /></svg></WinControl>
          <WinControl $w={27} aria-label="Restore">
            <svg width="12" height="12" viewBox="0 0 12 12" fill="none" stroke="#fff" strokeWidth="2"><path d="M4 3V1h7v7H9" /><rect x="1" y="4" width="7" height="7" /></svg>
          </WinControl>
          <WinControl $w={47} aria-label="Close"><CrossIcon /></WinControl>
        </WinControls>
      </TitleBar>

      <Header>
        <MenuBar>
          {menus.map(([a, u, b]) => <MenuItem key={a + u + b}>{a}{u && <u>{u}</u>}{b}</MenuItem>)}
          <MenuItem $end>Help</MenuItem>
        </MenuBar>
        <Brand>
          <Logo />
          <Product>Genesis 2000<SubProduct>Graphic Editor</SubProduct></Product>
          <Clock>05 Jul 2022<br />04:35 PM</Clock>
        </Brand>
      </Header>

      <Body>
        <Left>
          <JobBox>
            <Field>Job : 2v2r60ida0</Field>
            <Field>Step: set</Field>
            <MatrixWrap><MatrixButton>Job Matrix ...</MatrixButton></MatrixWrap>
          </JobBox>
          <LayerArea>
            <LayerPanel>
              <LayerList>
                {groups.map(g => (
                  <Group key={g[0][0]}>
                    {g.map(([name, bg]) => (
                      <LayerRow key={name}>
                        <Tick type="checkbox" defaultChecked={name === 'sslsh'} />
                        <Swatch $on={name === 'sslsh'} />
                        <LayerName $bg={bg}>
                          {name}
                          {name === 'sslsh' && (
                            <svg width="5" height="5" viewBox="0 0 5 5"><path d="M0 0h5v5H0z" /><path d="M1 1h1v1H1zM3 1h1v1H3zM1 3h1v1H1zM3 3h1v1H3z" fill="#fff" /></svg>
                          )}
                        </LayerName>
                      </LayerRow>
                    ))}
                  </Group>
                ))}
              </LayerList>
            </LayerPanel>
          </LayerArea>
          <Selected>Selected : 0</Selected>
        </Left>

        <Canvas><Board /></Canvas>

        <Right>
          <ToolGrid $edge={c.aquaDark}>
            {topTools.map(([n, t]) => <ToolButton key={n} $tone={t} aria-label={n}><ToolIcon name={n} /></ToolButton>)}
          </ToolGrid>
          <ToolGrid $edge="#6c6c6c">
            {editTools.map(([n, t]) => <ToolButton key={n} $tone={t} aria-label={n}><ToolIcon name={n} /></ToolButton>)}
          </ToolGrid>
          <Preview>
            <svg width="100%" height="100%" aria-label="Overview">
              <rect x="5" y="157" width="100%" height="121" fill={c.red} />
              <rect x="0" y="173" width="200" height="98" fill="none" stroke="#7c8c10" />
              <rect x="27" y="197" width="35" height="62" fill="none" stroke="#40e0e0" strokeWidth="2" />
              <path d="M24 256l6 6M30 256l-6 6" stroke="#a8c0c0" />
            </svg>
          </Preview>
          <Coords>{'X = 102.079217mm\nY = 384.750497mm'}</Coords>
        </Right>
      </Body>

      <Command>
        <CmdButton aria-label="Snap diagonal">
          <svg width="20" height="22" viewBox="0 0 20 22" fill="none" stroke={K}><rect x="0.5" y="0.5" width="19" height="21" /><path d="M4 5l12 12M4 9V5h4M16 13v4h-4" /></svg>
        </CmdButton>
        <CmdButton aria-label="Snap angle">
          <svg width="20" height="22" viewBox="0 0 20 22" fill="none" stroke={K}><rect x="0.5" y="0.5" width="19" height="21" /><path d="M3 18L17 4M6 4v5M9 18l2-4 2 4M15 14v4l3-2" /></svg>
        </CmdButton>
        <CmdButton $on aria-label="Grid">
          <svg width="18" height="20" viewBox="0 0 18 20" fill="none" stroke={K}><rect x="0.5" y="0.5" width="17" height="19" /><path d="M5 3h10v14H3V7zM9 3v14M3 10h12" /></svg>
        </CmdButton>
        <CmdLabel htmlFor="xy">X Y :</CmdLabel>
        <EntryWrap>
          <Entry id="xy" type="text" />
          <Caret width="7" height="17" viewBox="0 0 7 17" stroke={K} fill="none"><path d="M1 1h5M1 16h5M3 1v15" /></Caret>
        </EntryWrap>
        <CmdButton $on aria-label="Alert">
          <svg width="16" height="18" viewBox="0 0 16 18"><rect x="0.5" y="0.5" width="15" height="17" fill="none" stroke={K} /><path d="M7 3h2v8H7zM7 13h2v2H7z" /></svg>
        </CmdButton>
        <Prompt>&lt;M1&gt; - Select first area corner</Prompt>
        <UnitBox>
          <Unit aria-label="Units"><option>MM</option></Unit>
          <UnitMark />
        </UnitBox>
      </Command>
      <Status>rout,#95,Line,XS=162,YS=286.5,XE=162,YE=1.5,r254,POS,Ang=90</Status>

      <TaskBar>
        <Start aria-label="Start">
          <svg width="42" height="38" viewBox="0 0 42 38">
            <defs><radialGradient id="orb" cy="0.8"><stop offset="0" stopColor="#58c8f0" /><stop offset="0.6" stopColor="#1c5c98" /><stop offset="1" stopColor="#7898b8" /></radialGradient></defs>
            <circle cx="21" cy="19" r="18" fill="url(#orb)" stroke="#9cb8d0" />
            <path d="M12 10q4-3 8 0l-2 8q-4-3-8 0z" fill="#f06030" /><path d="M22 11q4 3 9 0l-2 8q-5 3-9 0z" fill="#90c840" />
            <path d="M10 20q4-3 8 0l-2 8q-4-3-8 0z" fill="#48a8e8" /><path d="M19 21q5 3 9 0l-2 8q-4 3-9 0z" fill="#fcd040" />
          </svg>
        </Start>
        <Tasks>
          {tasks.map(([n, art]) => (
            <Task key={n} $active={n === 'X server'} $stacked={n === 'Excel' || n === 'X server'} aria-label={n}>{art}</Task>
          ))}
        </Tasks>
        <Tray>
          <svg width="8" height="5"><path d="M0 5l4-5 4 5z" fill="#fff" /></svg>
          <svg width="16" height="16" viewBox="0 0 16 16"><path d="M2 1v14M3 2h5l1 1h5v6H9L8 8H3z" stroke="#fff" fill="#e8ecf4" /><circle cx="11" cy="11" r="4" fill="#d82820" /><path d="M9 9l4 4M13 9l-4 4" stroke="#fff" /></svg>
          <svg width="16" height="14" viewBox="0 0 16 14"><path d="M1 5h3l4-4v12L4 9H1z" fill="#fff" /><path d="M10 5q2 2 0 4M12 3q4 4 0 8M14 1q4 6 0 12" fill="none" stroke="#fff" /></svg>
          <svg width="16" height="16" viewBox="0 0 16 16" fill="none" stroke="#fff"><path d="M5 4h10v8H5zM7 14h6M10 12v2" strokeWidth="2" /><path d="M1 1v4h4V1M3 5v6h2" /></svg>
          <TrayTime>16:40<br />2022/7/5</TrayTime>
          <ShowDesktop aria-label="Show desktop" />
        </Tray>
      </TaskBar>

      <LangBar>
        <svg width="8" height="18"><path d="M1 1v17M5 1v17" stroke="#222" strokeWidth="2" strokeDasharray="2 2" /></svg>
        <svg width="15" height="12" viewBox="0 0 15 12"><path d="M7 3V1h4" stroke="#eee" fill="none" /><rect x="0" y="3" width="15" height="8" fill="#e4e4e4" /><path d="M2 5h11M2 7h11M4 9h7" stroke="#666" strokeDasharray="1 1" /></svg>
        <svg width="16" height="16" viewBox="0 0 16 16"><circle cx="8" cy="8" r="7" fill="#1020b0" stroke="#a8b4e8" /><text x="8" y="12" textAnchor="middle" fontFamily="Liberation Sans" fontWeight="bold" fontSize="12" fill="#fff">?</text></svg>
        <svg width="6" height="14"><path d="M0 0h6v2H0zM0 10h6l-3 4z" fill="#fff" /></svg>
      </LangBar>

      <PopWindow n={2} x={1124} y={71} w={444} h={345} dim size={25} pad="103px 162px 0 0" value="0036" />
      <PopWindow n={1} x={254} y={515} w={594} h={328} size={45} pad="122px 74px 0 0" value="0038" />
    </Screen>
  );
}
